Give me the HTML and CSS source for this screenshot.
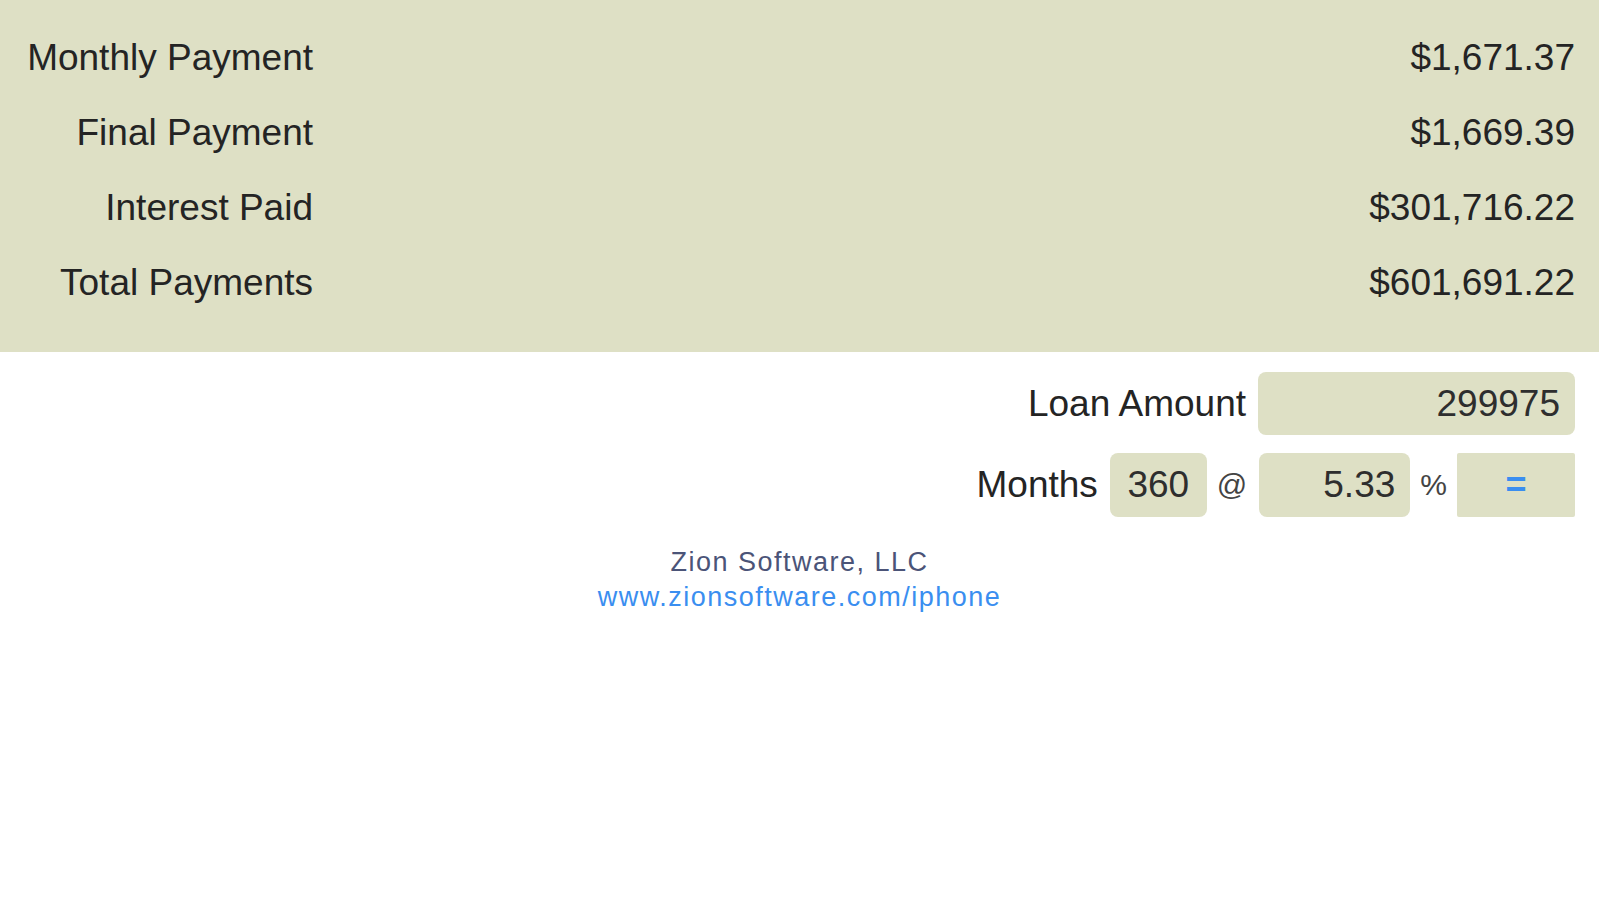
FILE: index.html
```html
<!DOCTYPE html>
<html lang="en">
<head>
  <meta charset="UTF-8" />
  <meta name="viewport" content="width=device-width, initial-scale=1.0" />
  <title>Loan Calculator</title>
  <link rel="stylesheet" href="styles.css">
</head>
<body>
  <section class="results">
    <div class="label">Monthly Payment</div>
    <div class="value">$1,671.37</div>
    <div class="label">Final Payment</div>
    <div class="value">$1,669.39</div>
    <div class="label">Interest Paid</div>
    <div class="value">$301,716.22</div>
    <div class="label">Total Payments</div>
    <div class="value">$601,691.22</div>
  </section>

  <section class="inputs">
    <div class="row">
      <label for="amount">Loan Amount</label>
      <input class="field field-amount" id="amount" type="text" value="299975" />
    </div>
    <div class="row">
      <label for="months">Months</label>
      <input class="field field-months" id="months" type="text" value="360" />
      <span class="sym sym-at">@</span>
      <input class="field field-rate" id="rate" type="text" value="5.33" />
      <span class="sym sym-pct">%</span>
      <button class="calc">=</button>
    </div>
  </section>

  <footer>
    <div class="company">Zion Software, LLC</div>
    <a href="#">www.zionsoftware.com/iphone</a>
  </footer>
</body>
</html>
```

FILE: styles.css
```css
* {
  margin: 0; padding: 0; box-sizing: border-box;
  font-family: "Liberation Sans", Arial, sans-serif;
}
body {
  background: #fff; color: #242424;
}
.results {
  background: #dee0c5;
  height: 352px;
  padding: 20px 24px 0 0;
  display: grid;
  grid-template-columns: 313px 1fr;
  grid-auto-rows: 75px;
  font-size: 37px; line-height: 75px;
}
.results .label, .results .value {
  text-align: right;
}
.inputs {
  padding: 20px 24px 0 0;
  display: flex; flex-direction: column;
  align-items: flex-end; gap: 18px;
}
.row {
  display: flex; align-items: center;
  font-size: 37px;
}
.row label {
  margin-right: 12px;
}
.field {
  background: #dee0c5; color: #2e2e2e;
  border: none; border-radius: 8px;
  font-size: 37px; height: 64px;
  padding: 0 15px; text-align: right;
  outline: none;
}
.field-amount {
  width: 317px; height: 63px;
}
.field-months {
  width: 97px; text-align: center; padding: 0;
}
.field-rate {
  width: 151px;
}
.sym {
  font-size: 30px; color: #444;
  margin: 0 10px;
}
.sym-at {
  margin-right: 12px;
}
.calc {
  width: 118px; height: 64px;
  background: #dee0c5; border: none; border-radius: 2px;
  color: #3a8ef0; font-size: 36px; font-weight: bold;
}
footer {
  margin-top: 28px;
  text-align: center;
  font-size: 27px; line-height: 35px;
  letter-spacing: 1.5px;
}
.company {
  color: #4b5478;
}
footer a {
  color: #3a8ef0; text-decoration: none;
}
```
